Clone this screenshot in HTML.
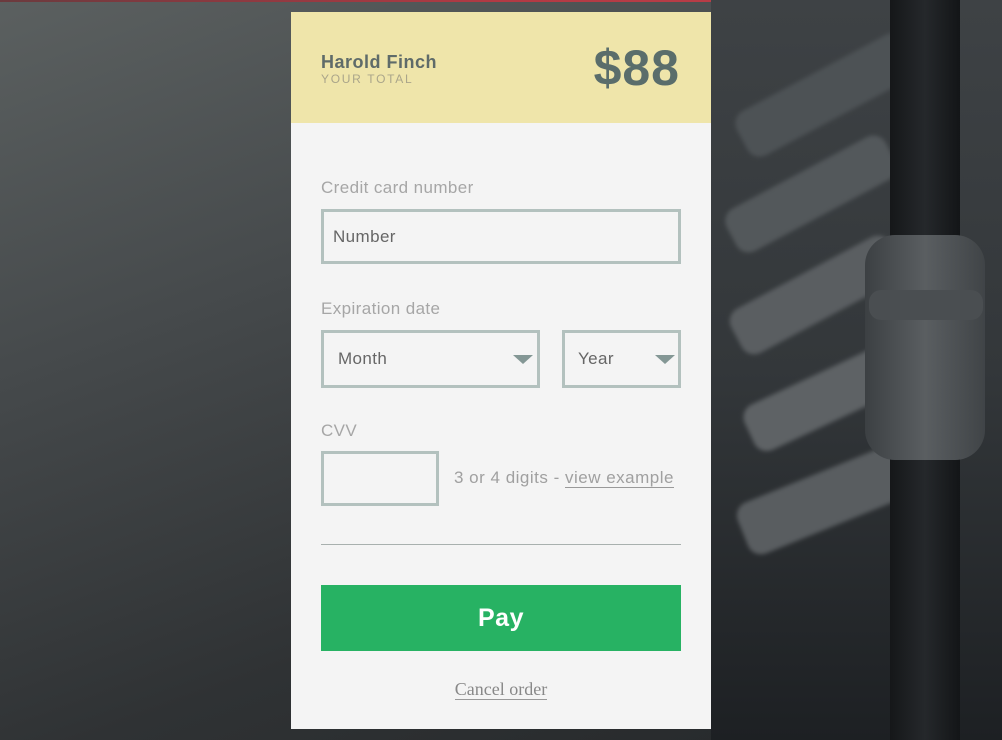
<!DOCTYPE html>
<html><head><meta charset="utf-8"><style>
*{margin:0;padding:0;box-sizing:border-box}
html,body{width:1002px;height:740px;overflow:hidden}
body{position:relative;font-family:"Liberation Sans",sans-serif;background:linear-gradient(160deg,#5b6060 0%,#45494b 35%,#2f3234 70%,#25282a 100%)}
.topline{position:absolute;left:0;top:0;width:1002px;height:2px;background:linear-gradient(90deg,#6b3a3e,#b23a44,#c0404a)}
.bg{position:absolute;left:711px;top:0;width:291px;height:740px;overflow:hidden;background:linear-gradient(180deg,#3e4245 0%,#33373a 50%,#1d2023 100%)}
.h{position:absolute;background:#5b5f62;border-radius:14px;filter:blur(2px)}
.card{position:absolute;left:291px;top:12px;width:420px;height:717px;background:#f4f4f4}
.head{height:111px;background:#efe5aa;position:relative}
.name{position:absolute;left:30px;top:40px;font-size:18px;letter-spacing:0.5px;font-weight:bold;color:#5f6b69}
.tot{position:absolute;left:30px;top:60px;font-size:12px;letter-spacing:1.7px;color:#aaa58a}
.amt{position:absolute;right:31px;top:27px;font-size:50px;font-weight:bold;color:#5a6d6b;letter-spacing:1px}
.lbl{position:absolute;left:30px;font-size:17px;letter-spacing:0.4px;color:#a6a6a6}
.box{position:absolute;border:3px solid #b3c1be;font-size:17px;letter-spacing:0.4px;color:#666;padding-left:9px;display:flex;align-items:center}
.arr{position:absolute;right:4px;top:22px;width:0;height:0;border-left:10px solid transparent;border-right:10px solid transparent;border-top:9px solid #849795}
</style></head><body>
<div class="topline"></div>
<div class="bg">
 <div class="h" style="left:20px;top:70px;width:190px;height:50px;transform:rotate(-28deg);background:#4d5255"></div>
 <div class="h" style="left:10px;top:170px;width:180px;height:48px;transform:rotate(-28deg);background:#53585b"></div>
 <div class="h" style="left:15px;top:270px;width:180px;height:50px;transform:rotate(-28deg);background:#5a5e61"></div>
 <div class="h" style="left:30px;top:370px;width:180px;height:50px;transform:rotate(-25deg);background:#5e6265"></div>
 <div class="h" style="left:25px;top:470px;width:190px;height:55px;transform:rotate(-22deg);background:#595d60"></div>
 <div style="position:absolute;left:179px;top:0;width:70px;height:740px;background:linear-gradient(90deg,#151719,#25282b,#131517)"></div>
 <div style="position:absolute;left:154px;top:235px;width:120px;height:225px;border-radius:30px;background:linear-gradient(90deg,#3c4043,#5a5e61,#404447)"></div>
 <div style="position:absolute;left:158px;top:290px;width:114px;height:30px;border-radius:12px;background:#4a4e51"></div>
</div>
<div class="card">
 <div class="head">
  <div class="name">Harold Finch</div>
  <div class="tot">YOUR TOTAL</div>
  <div class="amt">$88</div>
 </div>
 <div class="lbl" style="top:166px">Credit card number</div>
 <div class="box" style="left:30px;top:197px;width:360px;height:55px">Number</div>
 <div class="lbl" style="top:287px">Expiration date</div>
 <div class="box" style="left:30px;top:318px;width:219px;height:58px;padding-left:14px">Month<span class="arr"></span></div>
 <div class="box" style="left:271px;top:318px;width:119px;height:58px;padding-left:13px">Year<span class="arr" style="right:3px"></span></div>
 <div class="lbl" style="top:409px">CVV</div>
 <div class="box" style="left:30px;top:439px;width:118px;height:55px"></div>
 <div style="position:absolute;left:163px;top:456px;font-size:17px;letter-spacing:0.5px;color:#a0a0a0">3 or 4 digits - <span style="border-bottom:1px solid #999">view example</span></div>
 <div style="position:absolute;left:30px;top:532px;width:360px;height:1px;background:#a8b0ae"></div>
 <div style="position:absolute;left:30px;top:573px;width:360px;height:66px;background:#27b263;color:#fff;font-size:25px;letter-spacing:0.5px;font-weight:bold;display:flex;align-items:center;justify-content:center">Pay</div>
 <div style="position:absolute;left:0;width:420px;top:667px;text-align:center;font-family:'Liberation Serif',serif;font-size:18px;color:#888"><span style="border-bottom:1px solid #999">Cancel order</span></div>
</div>
</body></html>
